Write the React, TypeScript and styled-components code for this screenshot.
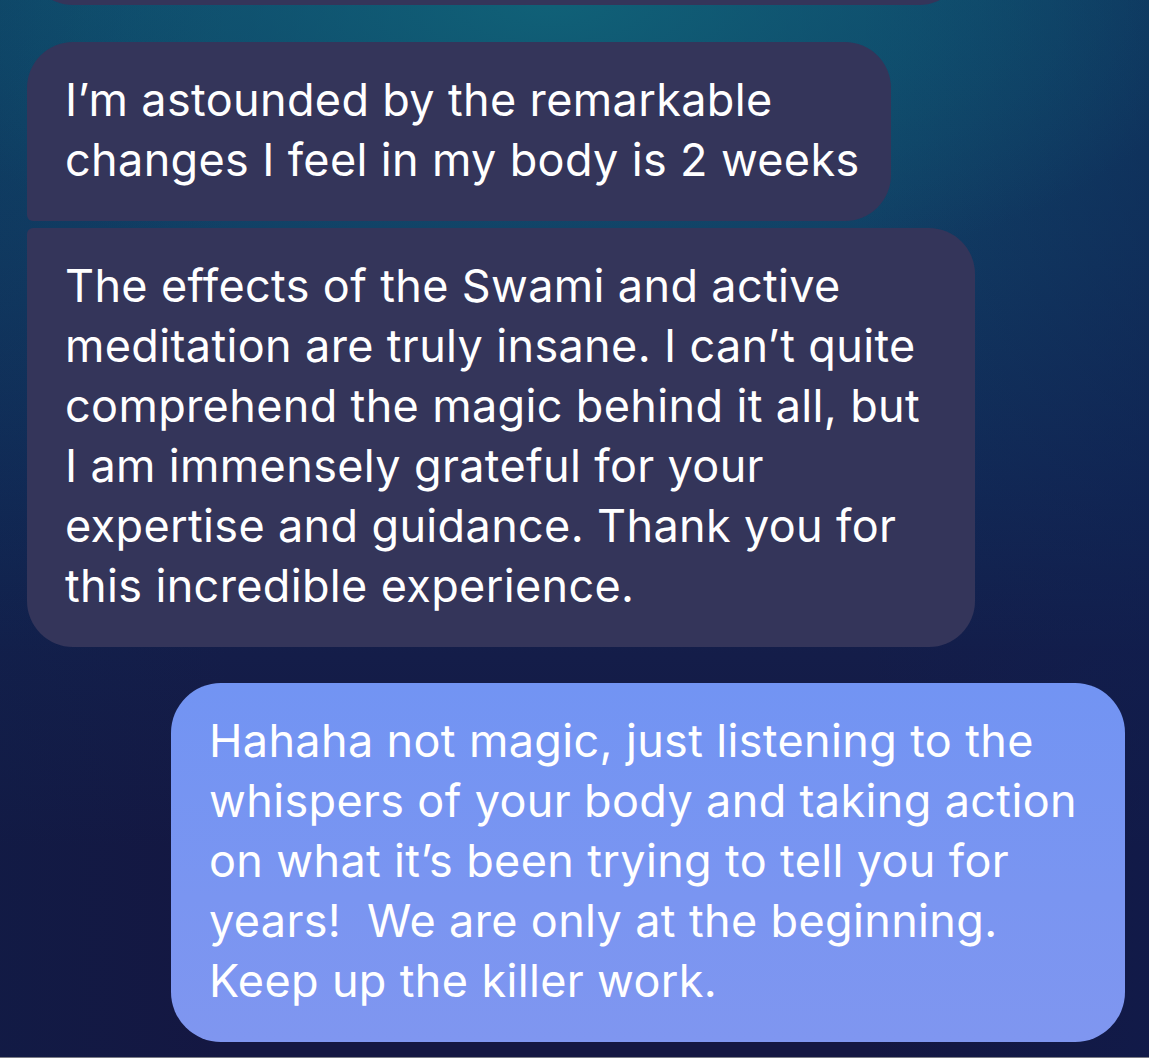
import styled, { createGlobalStyle, css } from 'styled-components'

const GlobalStyle = createGlobalStyle`
    html, body {
        margin: 0;
        padding: 0;
        background: #141742;
    }
    * {
        box-sizing: border-box;
    }
`

type Corners = 'first' | 'last' | 'single' | 'tail'

const radius = (c: Corners) => {
    switch (c) {
        case 'first':
            return '46px 46px 46px 6px'
        case 'last':
            return '6px 46px 46px 46px'
        case 'tail':
            return '0 0 46px 46px'
        default:
            return '50px'
    }
}

const messages: { from: 'me' | 'them'; width: number; corners: Corners; lines: string[] }[] = [
    {
        from: 'them',
        width: 864,
        corners: 'first',
        lines: ['I\u2019m astounded by the remarkable', 'changes I feel in my body is 2 weeks'],
    },
    {
        from: 'them',
        width: 948,
        corners: 'last',
        lines: [
            'The effects of the Swami and active',
            'meditation are truly insane. I can\u2019t quite',
            'comprehend the magic behind it all, but',
            'I am immensely grateful for your',
            'expertise and guidance. Thank you for',
            'this incredible experience.',
        ],
    },
    {
        from: 'me',
        width: 954,
        corners: 'single',
        lines: [
            'Hahaha not magic, just listening to the',
            'whispers of your body and taking action',
            'on what it\u2019s been trying to tell you for',
            'years!  We are only at the beginning.',
            'Keep up the killer work.',
        ],
    },
]

const App = () => {
    return (
        <>
            <GlobalStyle />
            <Screen>
                <Thread>
                    <PrevBubble />
                    <Group>
                        {messages
                            .filter((m) => m.from === 'them')
                            .map((m, i) => (
                                <Bubble key={i} $from={m.from} $width={m.width} $corners={m.corners}>
                                    {m.lines.map((l, j) => (
                                        <Line key={j}>{l}</Line>
                                    ))}
                                </Bubble>
                            ))}
                    </Group>
                    {messages
                        .filter((m) => m.from === 'me')
                        .map((m, i) => (
                            <Bubble key={i} $from={m.from} $width={m.width} $corners={m.corners}>
                                {m.lines.map((l, j) => (
                                    <Line key={j}>{l}</Line>
                                ))}
                            </Bubble>
                        ))}
                </Thread>
            </Screen>
        </>
    )
}

export default App

const Screen = styled.div`
    width: 1149px;
    height: 1058px;
    overflow: hidden;
    border-bottom: 1px solid #7b7c86;
    background:
        radial-gradient(ellipse 680px 300px at 48% 0%, rgba(16, 98, 120, 0.95) 0%, rgba(16, 90, 116, 0.5) 45%, rgba(16, 80, 110, 0) 100%),
        linear-gradient(90deg, rgba(10, 40, 80, 0.2) 0%, rgba(10, 40, 80, 0) 20%, rgba(10, 40, 80, 0) 75%, rgba(14, 30, 80, 0.45) 100%),
        linear-gradient(180deg, #0f4b6c 0%, #113c63 25%, #122b57 45%, #141d49 62%, #141742 80%, #141742 100%);
    font-family: Inter, "Noto Sans", "Liberation Sans", sans-serif;
    color: #ffffff;
`

const Thread = styled.div`
    display: flex;
    flex-direction: column;
    gap: 36px;
    padding: 0 24px 0 27px;
`

const Group = styled.div`
    display: flex;
    flex-direction: column;
    gap: 7px;
`

const PrevBubble = styled.div`
    width: 938px;
    height: 100px;
    margin-top: -95px;
    margin-bottom: 1px;
    background: #34355a;
    border-radius: ${radius('tail')};
`

const Bubble = styled.div<{ $from: 'me' | 'them'; $width: number; $corners: Corners }>`
    width: ${(p) => p.$width}px;
    padding: 28px 0 31px 38px;
    border-radius: ${(p) => radius(p.$corners)};
    font-size: 45px;
    line-height: 60px;
    font-weight: 400;
    letter-spacing: 0.35px;
    ${(p) =>
        p.$from === 'me'
            ? css`
                  align-self: flex-end;
                  background: linear-gradient(180deg, #7294f3 0%, #7a95f1 60%, #7f96f0 100%);
              `
            : css`
                  align-self: flex-start;
                  background: #34355a;
              `}
`

const Line = styled.span`
    display: block;
    white-space: pre;
`
